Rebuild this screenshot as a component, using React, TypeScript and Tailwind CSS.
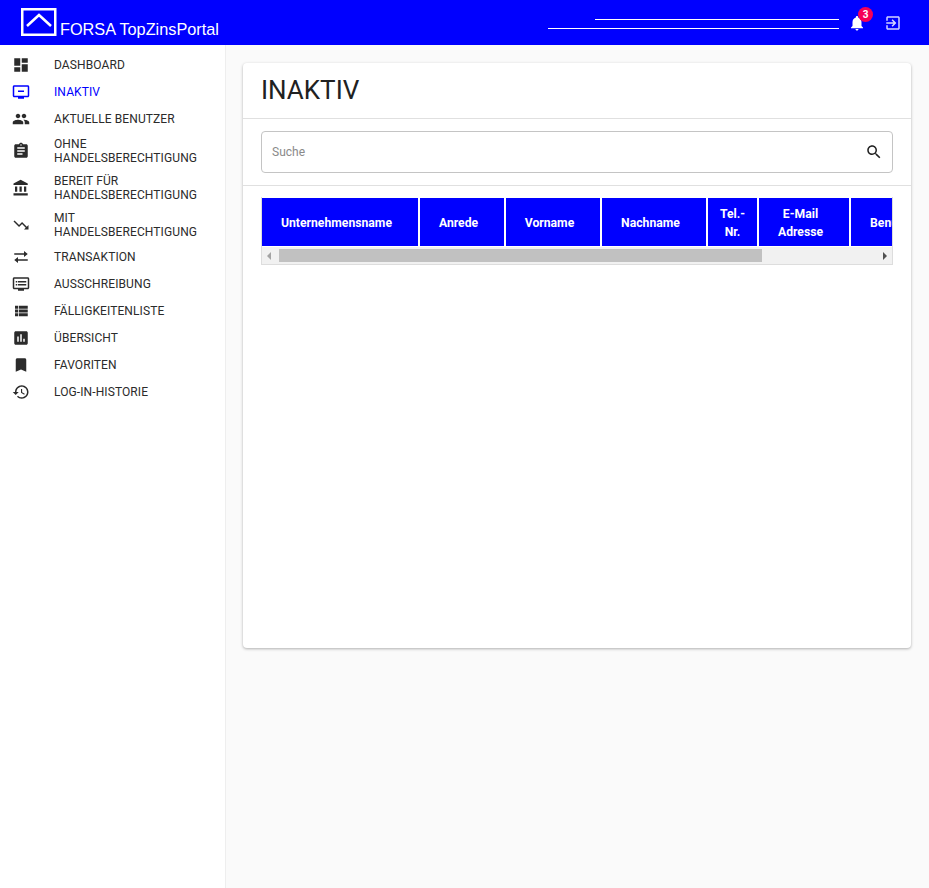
import React from "react";

const navItems = [
  { label: ["DASHBOARD"], d: "M3 13h8V3H3v10zm0 8h8v-6H3v6zm10 0h8V11h-8v10zm0-18v6h8V3h-8z" },
  { label: ["INAKTIV"], active: true, d: "M21 3H3c-1.1 0-2 .9-2 2v12c0 1.1.9 2 2 2h5v2h8v-2h5c1.1 0 1.99-.9 1.99-2L23 5c0-1.1-.9-2-2-2zm0 14H3V5h18v12zM8 10h8v2H8z" },
  { label: ["AKTUELLE BENUTZER"], d: "M16 11c1.66 0 2.99-1.34 2.99-3S17.66 5 16 5c-1.66 0-3 1.34-3 3s1.34 3 3 3zm-8 0c1.66 0 2.99-1.34 2.99-3S9.66 5 8 5C6.34 5 5 6.34 5 8s1.34 3 3 3zm0 2c-2.33 0-7 1.17-7 3.5V19h14v-2.5c0-2.33-4.67-3.5-7-3.5zm8 0c-.29 0-.62.02-.97.05 1.16.84 1.97 1.97 1.97 3.45V19h6v-2.5c0-2.33-4.67-3.5-7-3.5z" },
  { label: ["OHNE", "HANDELSBERECHTIGUNG"], d: "M19 3h-4.18C14.4 1.84 13.3 1 12 1c-1.3 0-2.4.84-2.82 2H5c-1.1 0-2 .9-2 2v14c0 1.1.9 2 2 2h14c1.1 0 2-.9 2-2V5c0-1.1-.9-2-2-2zm-7 0c.55 0 1 .45 1 1s-.45 1-1 1-1-.45-1-1 .45-1 1-1zm2 14H7v-2h7v2zm3-4H7v-2h10v2zm0-4H7V7h10v2z" },
  { label: ["BEREIT FÜR", "HANDELSBERECHTIGUNG"], d: "M4 10v7h3v-7H4zm6 0v7h3v-7h-3zM2 22h19v-3H2v3zm14-12v7h3v-7h-3zm-4.5-9L2 6v2h19V6l-9.5-5z" },
  { label: ["MIT", "HANDELSBERECHTIGUNG"], d: "M16 18l2.29-2.29-4.88-4.88-4 4L2 7.41 3.41 6l6 6 4-4 6.3 6.29L22 12v6z" },
  { label: ["TRANSAKTION"], d: "M3 7h13V4l5 4-5 4V9H3zM21 15H8v-3l-5 4 5 4v-3h13z" },
  { label: ["AUSSCHREIBUNG"], d: "M21 3H3c-1.1 0-2 .9-2 2v12c0 1.1.9 2 2 2h5v2h8v-2h5c1.1 0 1.99-.9 1.99-2L23 5c0-1.1-.9-2-2-2zm0 14H3V5h18v12zm-2-9H8v2h11V8zm0 4H8v2h11v-2zM7 8H5v2h2V8zm0 4H5v2h2v-2z" },
  { label: ["FÄLLIGKEITENLISTE"], d: "M4 14h4v-4H4v4zm0 5h4v-4H4v4zM4 9h4V5H4v4zm5 5h12v-4H9v4zm0 5h12v-4H9v4zM9 5v4h12V5H9z" },
  { label: ["ÜBERSICHT"], d: "M19 3H5c-1.1 0-2 .9-2 2v14c0 1.1.9 2 2 2h14c1.1 0 2-.9 2-2V5c0-1.1-.9-2-2-2zM9 17H7v-7h2v7zm4 0h-2V7h2v10zm4 0h-2v-4h2v4z" },
  { label: ["FAVORITEN"], d: "M17 3H7c-1.1 0-1.99.9-1.99 2L5 21l7-3 7 3V5c0-1.1-.9-2-2-2z" },
  { label: ["LOG-IN-HISTORIE"], d: "M13 3c-4.97 0-9 4.03-9 9H1l3.89 3.89.07.14L9 12H6c0-3.87 3.13-7 7-7s7 3.13 7 7-3.13 7-7 7c-1.93 0-3.68-.79-4.94-2.06l-1.42 1.42C8.27 19.99 10.51 21 13 21c4.97 0 9-4.03 9-9s-4.03-9-9-9zm-1 5v5l4.28 2.54.72-1.21-3.5-2.08V8H12z" },
];

const columns = [
  { label: ["Unternehmensname"], className: "w-[156px] pr-[7px]" },
  { label: ["Anrede"], className: "w-[84px] pr-[7px]" },
  { label: ["Vorname"], className: "w-[94px] pr-[7px]" },
  { label: ["Nachname"], className: "w-[104px] pr-[7px]" },
  { label: ["Tel.-", "Nr."], className: "w-[49px]" },
  { label: ["E-Mail", "Adresse"], className: "w-[90px] pr-[7px]" },
  { label: ["Benutzername"], className: "w-[120px] pr-[2px]" },
];

const Icon = ({ d, className }: { d: string; className?: string }) => (
  <svg viewBox="0 0 24 24" fill="currentColor" className={className}>
    <path d={d} fillRule="evenodd" />
  </svg>
);

export default function App() {
  return (
    <div className="min-h-screen flex flex-col bg-[#fafafa] font-['Roboto',sans-serif] text-[#212121]">
      {/* Top bar */}
      <header className="h-[45px] shrink-0 bg-[#0000ff] flex text-white">
        <div className="ml-[21px] mt-[7px] flex items-end h-[29px]">
          <svg viewBox="0 0 36 28" className="w-[36px] h-[28px]" fill="none" stroke="white">
            <rect x="1.25" y="1.25" width="33" height="25.5" strokeWidth="2.5" />
            <path d="M6 18 L18 7 L30 18" strokeWidth="2.5" />
          </svg>
          <span className="ml-[3px] text-[16.3px] leading-[18px] font-['Liberation_Sans',sans-serif] whitespace-nowrap translate-y-[2px]">
            FORSA TopZinsPortal
          </span>
        </div>
        <div className="ml-auto pt-[19px] flex flex-col items-end gap-[8px]">
          <div className="w-[244px] h-px bg-white" />
          <div className="w-[291px] h-px bg-white" />
        </div>
        <div className="ml-[9px] mr-[27px] mt-[14px] flex gap-[18px] items-start">
          <div className="relative w-[18px] h-[18px]">
            <Icon
              d="M12 22c1.1 0 2-.9 2-2h-4c0 1.1.89 2 2 2zm6-6v-5c0-3.07-1.64-5.64-4.5-6.32V4c0-.83-.67-1.5-1.5-1.5s-1.5.67-1.5 1.5v.68C7.63 5.36 6 7.92 6 11v5l-2 2v1h16v-1l-2-2z"
              className="w-[18px] h-[18px]"
            />
            <span className="absolute left-[10px] top-[-7px] w-[15px] h-[15px] rounded-full bg-[#f50057] text-white text-[10px] leading-[15px] font-bold text-center">
              3
            </span>
          </div>
          <Icon
            d="M10.09 15.59L11.5 17l5-5-5-5-1.41 1.41L12.67 11H3v2h9.67l-2.58 2.59zM19 3H5c-1.11 0-2 .9-2 2v4h2V5h14v14H5v-4H3v4c0 1.1.89 2 2 2h14c1.1 0 2-.9 2-2V5c0-1.1-.9-2-2-2z"
            className="w-[18px] h-[18px] text-[#d4d4ff]"
          />
        </div>
      </header>

      <div className="flex-1 flex">
        {/* Sidebar */}
        <nav className="w-[226px] shrink-0 bg-white border-r border-[#eeeeee] pt-[6px]">
          {navItems.map((item) => (
            <div
              key={item.label.join(" ")}
              className={`min-h-[27px] py-[4.5px] pl-[12px] flex items-center text-[12px] leading-[14px] tracking-[0.1px] ${item.active ? "text-[#0000ff]" : "text-[#2b2b2b]"}`}
            >
              <Icon d={item.d} className="w-[18px] h-[18px] shrink-0" />
              <div className="ml-[24px]">
                {item.label.map((line) => (
                  <div key={line}>{line}</div>
                ))}
              </div>
            </div>
          ))}
        </nav>

        {/* Main */}
        <main className="flex-1 min-w-0 pl-[17px] pr-[18px] pt-[18px]">
          <section className="h-[585px] bg-white rounded-[4px] shadow-[0_1px_3px_rgba(0,0,0,0.3)]">
            <div className="h-[56px] px-[18px] pb-[2px] border-b border-[#e0e0e0] flex items-center">
              <h1 className="text-[26px] leading-[32px] font-normal">INAKTIV</h1>
            </div>
            <div className="h-[67px] px-[18px] pt-[12px] border-b border-[#e0e0e0]">
              <div className="h-[42px] rounded-[4px] border border-[#c4c4c4] pl-[10px] pr-[9px] flex items-center justify-between">
                <span className="text-[12px] text-[#8a8a8a]">Suche</span>
                <Icon
                  d="M15.5 14h-.79l-.28-.27C15.41 12.59 16 11.11 16 9.5 16 5.91 13.09 3 9.5 3S3 5.91 3 9.5 5.91 16 9.5 16c1.61 0 3.09-.59 4.23-1.57l.27.28v.79l5 4.99L20.49 19l-4.99-5zm-6 0C7.01 14 5 11.99 5 9.5S7.01 5 9.5 5 14 7.01 14 9.5 11.99 14 9.5 14z"
                  className="w-[18px] h-[18px]"
                />
              </div>
            </div>
            {/* Table with horizontal scroll */}
            <div className="mx-[18px] mt-[11px] border border-[#dddddd] border-t-0">
              <div className="flex gap-[2px] overflow-hidden pt-px">
                {columns.map((col) => (
                  <div
                    key={col.label[0]}
                    className={`${col.className} shrink-0 h-[48px] pt-[2px] bg-[#0000ff] text-white text-[12.2px] leading-[18px] font-bold flex flex-col items-center justify-center`}
                  >
                    {col.label.map((line) => (
                      <div key={line}>{line}</div>
                    ))}
                  </div>
                ))}
              </div>
              <div className="h-[17px] mt-px bg-[#f1f1f1] flex items-center justify-between px-[5px]">
                <div className="w-0 h-0 border-y-[4px] border-y-transparent border-r-[4px] border-r-[#a3a3a3]" />
                <div className="w-[483px] h-[13px] bg-[#c1c1c1] ml-[8px] mr-auto" />
                <div className="w-0 h-0 border-y-[4px] border-y-transparent border-l-[4px] border-l-[#505050]" />
              </div>
            </div>
          </section>
        </main>
      </div>
    </div>
  );
}
